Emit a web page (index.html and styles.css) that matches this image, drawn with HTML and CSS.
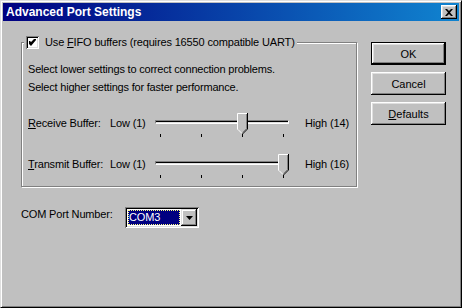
FILE: index.html
```html
<!DOCTYPE html>
<html lang="en">

<head>
    <meta charset="UTF-8">
    <title>Advanced Port Settings</title>
    <link rel="stylesheet" href="styles.css">
</head>

<body>
    <div class="window">
        <div class="titlebar">
            <span class="title">Advanced Port Settings</span>
            <span class="close">
                <svg width="8" height="7" viewBox="0 0 8 7">
                    <path d="M0 0h2l2 2 2-2h2L5 3.5 8 7H6L4 5 2 7H0l3-3.5z" fill="#000" />
                </svg>
            </span>
        </div>

        <div class="body">
            <div class="main">
                <fieldset class="group">
                    <legend>
                        <span class="check">
                            <svg width="7" height="7" viewBox="0 0 7 7">
                                <path d="M0 2h1l1 1 4-4v0h1v2L2 7 0 5z" fill="#000" />
                            </svg>
                        </span>
                        <span>Use <u>F</u>IFO buffers (requires 16550 compatible UART)</span>
                    </legend>

                    <p class="hint">Select lower settings to correct connection problems.</p>
                    <p class="hint">Select higher settings for faster performance.</p>

                    <div class="slider-row first">
                        <span class="label"><u>R</u>eceive Buffer:</span>
                        <span class="low">Low (1)</span>
                        <div class="slider">
                            <div class="track"></div>
                            <div class="ticks"><i></i><i></i><i></i><i></i></div>
                            <svg class="thumb" style="left: 82px" width="11" height="21" viewBox="0 0 11 21">
                                <path d="M0 0H11V16L5.5 21 0 16Z" fill="#c0c0c0" />
                                <path d="M0.5 16.5V0.5H10" stroke="#fff" fill="none" />
                                <path d="M1 16.5L5 20.5" stroke="#fff" fill="none" />
                                <path d="M10.5 0V16L5.5 21" stroke="#000" fill="none" />
                                <path d="M9.5 1V15.5L5.5 19.5" stroke="#808080" fill="none" />
                            </svg>
                        </div>
                        <span class="high">High (14)</span>
                    </div>

                    <div class="slider-row">
                        <span class="label"><u>T</u>ransmit Buffer:</span>
                        <span class="low">Low (1)</span>
                        <div class="slider">
                            <div class="track"></div>
                            <div class="ticks"><i></i><i></i><i></i><i></i></div>
                            <svg class="thumb" style="left: 123px" width="11" height="21" viewBox="0 0 11 21">
                                <path d="M0 0H11V16L5.5 21 0 16Z" fill="#c0c0c0" />
                                <path d="M0.5 16.5V0.5H10" stroke="#fff" fill="none" />
                                <path d="M1 16.5L5 20.5" stroke="#fff" fill="none" />
                                <path d="M10.5 0V16L5.5 21" stroke="#000" fill="none" />
                                <path d="M9.5 1V15.5L5.5 19.5" stroke="#808080" fill="none" />
                            </svg>
                        </div>
                        <span class="high">High (16)</span>
                    </div>
                </fieldset>

                <div class="com-row">
                    <span class="com-label">COM Port Number:</span>
                    <div class="combo">
                        <span class="value">COM3</span>
                        <span class="drop">
                            <svg width="7" height="4" viewBox="0 0 7 4">
                                <path d="M0 0H7L3.5 4Z" fill="#000" />
                            </svg>
                        </span>
                    </div>
                </div>
            </div>

            <div class="buttons">
                <button class="btn default">OK</button>
                <button class="btn">Cancel</button>
                <button class="btn"><u>D</u>efaults</button>
            </div>
        </div>
    </div>
</body>

</html>
```

FILE: styles.css
```css
* {
    margin: 0;
    padding: 0;
    box-sizing: border-box;
}

body {
    width: 462px;
    height: 308px;
    overflow: hidden;
    background-color: #c0c0c0;
    font: 11px "Liberation Sans", Arial, sans-serif;
    letter-spacing: -0.15px;
    color: #000;
}

.window {
    width: 462px;
    height: 308px;
    display: flex;
    flex-direction: column;
    padding: 2px;
    border: 1px solid;
    border-color: #dfdfdf #000 #000 #dfdfdf;
    box-shadow: inset 1px 1px #fff, inset -1px -1px #808080;
    background-color: #c0c0c0;
}

/* 标题栏 */
.titlebar {
    height: 18px;
    display: flex;
    align-items: center;
    justify-content: space-between;
    padding: 0 2px 0 3px;
    background: linear-gradient(to right, #000080, #1084d0);
}

.title {
    color: #fff;
    font-weight: bold;
    font-size: 12px;
    letter-spacing: 0;
}

.close {
    width: 16px;
    height: 14px;
    display: flex;
    align-items: center;
    justify-content: center;
    background-color: #c0c0c0;
    box-shadow: inset -1px -1px #000, inset 1px 1px #fff, inset -2px -2px #808080, inset 2px 2px #dfdfdf;
}

.body {
    display: flex;
    gap: 14px;
    padding: 15px 13px 0 18px;
}

.main {
    width: 336px;
}

/* 分组框 */
.group {
    border: 1px solid #808080;
    box-shadow: 1px 1px 0 #fff, inset 1px 1px 0 #fff;
    padding: 11px 6px 9px 6px;
    height: 151px;
}

.group legend {
    display: flex;
    align-items: center;
    gap: 6px;
    margin-left: -4px;
    padding: 0 2px;
    background-color: #c0c0c0;
    line-height: 13px;
}

.check {
    width: 13px;
    height: 13px;
    display: flex;
    align-items: center;
    justify-content: center;
    background-color: #fff;
    box-shadow: inset 1px 1px #808080, inset -1px -1px #fff, inset 2px 2px #000, inset -2px -2px #dfdfdf;
}

.hint {
    line-height: 18px;
    letter-spacing: -0.2px;
}

.slider-row {
    display: flex;
    align-items: flex-start;
    height: 24px;
    margin-top: 17px;
    white-space: nowrap;
}

.slider-row.first {
    margin-top: 17px;
}

.label {
    width: 82px;
    padding-top: 4px;
    line-height: 13px;
}

.low {
    width: 45px;
    padding-top: 4px;
    line-height: 13px;
}

.high {
    margin-left: 16px;
    padding-top: 4px;
    line-height: 13px;
}

.slider {
    position: relative;
    width: 134px;
    height: 24px;
    padding-top: 7px;
}

.track {
    height: 4px;
    border: 1px solid;
    border-color: #808080 #fff #fff #808080;
    background-color: #000;
    box-shadow: inset 0 -1px #dfdfdf;
}

.ticks {
    display: flex;
    justify-content: space-between;
    padding: 0 5px;
    margin-top: 10px;
}

.ticks i {
    width: 1px;
    height: 3px;
    background-color: #000;
}

.thumb {
    position: absolute;
    top: 0;
}

/* 端口选择 */
.com-row {
    display: flex;
    align-items: flex-start;
    margin-top: 20px;
}

.com-label {
    width: 104px;
    line-height: 13px;
    padding-top: 1px;
}

.combo {
    width: 74px;
    height: 21px;
    display: flex;
    padding: 2px;
    background-color: #fff;
    box-shadow: inset 1px 1px #808080, inset -1px -1px #fff, inset 2px 2px #000, inset -2px -2px #dfdfdf;
}

.value {
    flex: 1;
    margin: 1px;
    padding-left: 1px;
    color: #fff;
    background-color: #000080;
    outline: 1px dotted #ffff80;
    outline-offset: -1px;
    line-height: 15px;
}

.drop {
    width: 16px;
    height: 17px;
    display: flex;
    align-items: center;
    justify-content: center;
    background-color: #c0c0c0;
    box-shadow: inset -1px -1px #000, inset 1px 1px #dfdfdf, inset -2px -2px #808080, inset 2px 2px #fff;
}

/* 按钮 */
.buttons {
    display: flex;
    flex-direction: column;
    gap: 7px;
    margin-top: 6px;
}

.btn {
    width: 75px;
    height: 23px;
    border: none;
    background-color: #c0c0c0;
    font: 11px "Liberation Sans", Arial, sans-serif;
    color: #000;
    box-shadow: inset -1px -1px #000, inset 1px 1px #fff, inset -2px -2px #808080, inset 2px 2px #dfdfdf;
}

.btn.default {
    border: 1px solid #000;
    box-shadow: inset -1px -1px #000, inset 1px 1px #fff, inset -2px -2px #808080, inset 2px 2px #dfdfdf;
}
```
